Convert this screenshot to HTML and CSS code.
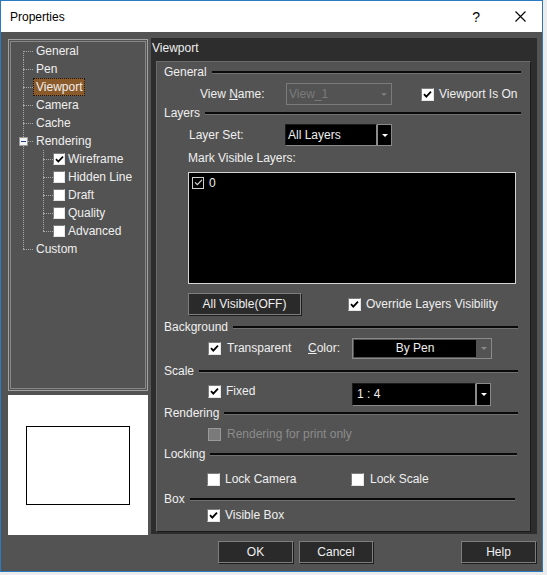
FILE: index.html
```html
<!DOCTYPE html>
<html lang="en">
<head>
    <meta charset="UTF-8">
    <title>Properties</title>
    <link rel="stylesheet" href="styles.css">
</head>
<body>
    <div class="window">
        <div class="titlebar">
            <span class="title">Properties</span>
            <span class="help-q">?</span>
            <span class="close">
                <svg width="11" height="11" viewBox="0 0 11 11"><path d="M0.5 0.5L10.5 10.5M10.5 0.5L0.5 10.5" stroke="#000" stroke-width="1.1" fill="none"/></svg>
            </span>
        </div>

        <div class="main">
            <div class="side">
                <div class="tree">
                    <div class="node first"><span class="gutter"><span class="elbow"></span></span><span class="label">General</span></div>
                    <div class="node"><span class="gutter"><span class="elbow"></span></span><span class="label">Pen</span></div>
                    <div class="node"><span class="gutter"><span class="elbow"></span></span><span class="label selected">Viewport</span></div>
                    <div class="node"><span class="gutter"><span class="elbow"></span></span><span class="label">Camera</span></div>
                    <div class="node"><span class="gutter"><span class="elbow"></span></span><span class="label">Cache</span></div>
                    <div class="node"><span class="gutter"><span class="toggle"></span><span class="elbow short"></span></span><span class="label">Rendering</span></div>
                    <div class="node"><span class="gutter"></span><span class="gutter child"><span class="elbow"></span></span><span class="cb small"><svg width="9" height="9" viewBox="0 0 9 9"><path d="M1 4.2L3.3 6.6L8 1.6" stroke="#000" stroke-width="1.7" fill="none"/></svg></span><span class="label">Wireframe</span></div>
                    <div class="node"><span class="gutter"></span><span class="gutter child"><span class="elbow"></span></span><span class="cb small"></span><span class="label">Hidden Line</span></div>
                    <div class="node"><span class="gutter"></span><span class="gutter child"><span class="elbow"></span></span><span class="cb small"></span><span class="label">Draft</span></div>
                    <div class="node"><span class="gutter"></span><span class="gutter child"><span class="elbow"></span></span><span class="cb small"></span><span class="label">Quality</span></div>
                    <div class="node"><span class="gutter"></span><span class="gutter child last"><span class="elbow"></span></span><span class="cb small"></span><span class="label">Advanced</span></div>
                    <div class="node last"><span class="gutter"><span class="elbow"></span></span><span class="label">Custom</span></div>
                </div>
                <div class="preview">
                    <div class="preview-rect"></div>
                </div>
            </div>

            <div class="page">
                <div class="page-title">Viewport</div>
                <div class="page-body">
                    <div class="group g-general">General</div>
                    <div class="row r-view">
                        <span class="lbl w-view">View <u>N</u>ame:</span>
                        <div class="combo disabled w-name">
                            <span class="combo-text">View_1</span>
                            <span class="combo-btn"><i class="arrow"></i></span>
                        </div>
                        <span class="cb on-ml29"><svg width="9" height="9" viewBox="0 0 9 9"><path d="M1 4.2L3.3 6.6L8 1.6" stroke="#000" stroke-width="1.8" fill="none"/></svg></span>
                        <span class="lbl ml5">Viewport Is On</span>
                    </div>

                    <div class="group g-tight">Layers</div>
                    <div class="row r-layerset">
                        <span class="lbl w-set">Layer Set:</span>
                        <div class="combo dark w-set-combo">
                            <span class="combo-text">All Layers</span>
                            <span class="combo-btn boxed"><i class="arrow"></i></span>
                        </div>
                    </div>
                    <div class="row r-mark"><span class="lbl">Mark Visible Layers:</span></div>
                    <div class="listbox">
                        <div class="list-item">
                            <span class="cb dark"><svg width="9" height="9" viewBox="0 0 9 9"><path d="M1 4.4L3.3 6.7L8 1.8" stroke="#d8d8d8" stroke-width="1.2" fill="none"/></svg></span>
                            <span class="lbl ml5">0</span>
                        </div>
                    </div>
                    <div class="row r-allvis">
                        <span class="btn w-allvis">All Visible(OFF)</span>
                        <span class="cb ml47"><svg width="9" height="9" viewBox="0 0 9 9"><path d="M1 4.2L3.3 6.6L8 1.6" stroke="#000" stroke-width="1.8" fill="none"/></svg></span>
                        <span class="lbl ml5">Override Layers Visibility</span>
                    </div>

                    <div class="group g-wide g-loose">Background</div>
                    <div class="row r-bg">
                        <span class="cb"><svg width="9" height="9" viewBox="0 0 9 9"><path d="M1 4.2L3.3 6.6L8 1.6" stroke="#000" stroke-width="1.8" fill="none"/></svg></span>
                        <span class="lbl ml6 w-81">Transparent</span>
                        <span class="lbl w-44"><u>C</u>olor:</span>
                        <div class="combo pen">
                            <span class="combo-text center">By Pen</span>
                            <span class="combo-btn"><i class="arrow grey"></i></span>
                        </div>
                    </div>

                    <div class="group g-wide g-loose">Scale</div>
                    <div class="row r-scale">
                        <span class="cb lift"><svg width="9" height="9" viewBox="0 0 9 9"><path d="M1 4.2L3.3 6.6L8 1.6" stroke="#000" stroke-width="1.8" fill="none"/></svg></span>
                        <span class="lbl ml5 w-126 lift">Fixed</span>
                        <div class="combo dark scale">
                            <span class="combo-text pad4">1 : 4</span>
                            <span class="combo-btn boxed"><i class="arrow"></i></span>
                        </div>
                    </div>

                    <div class="group g-wide g-tight">Rendering</div>
                    <div class="row r-print">
                        <span class="cb off"></span>
                        <span class="lbl ml6 muted">Rendering for print only</span>
                    </div>

                    <div class="group g-lock">Locking</div>
                    <div class="row r-lock">
                        <span class="cb"></span>
                        <span class="lbl ml5 w-126">Lock Camera</span>
                        <span class="cb"></span>
                        <span class="lbl ml6">Lock Scale</span>
                    </div>

                    <div class="group g-box">Box</div>
                    <div class="row r-box">
                        <span class="cb"><svg width="9" height="9" viewBox="0 0 9 9"><path d="M1 4.2L3.3 6.6L8 1.6" stroke="#000" stroke-width="1.8" fill="none"/></svg></span>
                        <span class="lbl ml5">Visible Box</span>
                    </div>
                </div>
            </div>
        </div>

        <div class="footer">
            <span class="btn w-ok">OK</span>
            <span class="btn w-cancel">Cancel</span>
            <span class="btn w-help">Help</span>
        </div>
    </div>
</body>
</html>
```

FILE: styles.css
```css
body{
    margin: 0;
    background: #ececec;
    font-family: "Liberation Sans", Arial, sans-serif;
    font-size: 12px;
}

.window{
    width: 543px;
    height: 572px;
    box-sizing: border-box;
    border: 1px solid #2b79c2;
    background: #535353;
    color: #efefef;
}

/* title bar */
.titlebar{
    height: 31px;
    background: #fff;
    color: #000;
    display: flex;
    align-items: center;
    padding-left: 9px;
}

.title{
    flex: 1;
}

.help-q{
    font-size: 14px;
    margin-right: 35px;
}

.close{
    display: flex;
    margin-right: 16px;
}

/* main area */
.main{
    display: flex;
    align-items: flex-start;
    gap: 3px;
    padding: 6px 0 0 7px;
}

.side{
    width: 140px;
    margin-top: 1px;
    display: flex;
    flex-direction: column;
    gap: 4px;
}

.tree{
    height: 352px;
    box-sizing: border-box;
    border: 1px solid #a2a2a2;
    box-shadow: inset 0 0 0 1px #535353, inset 0 0 0 2px #878787;
    padding-top: 2px;
}

.node{
    display: flex;
    align-items: center;
    height: 18px;
}

.gutter{
    width: 24px;
    align-self: stretch;
    display: flex;
    align-items: center;
    flex-shrink: 0;
    background: repeating-linear-gradient(to bottom, #a8a8a8 0 1px, transparent 1px 2px) 14px 0 / 1px 100% no-repeat;
}

.node.first > .gutter{
    background-position: 14px 100%;
    background-size: 1px 50%;
}

.node.last > .gutter,
.gutter.child.last{
    background-size: 1px 50%;
}

.gutter.child{
    width: 20px;
    background-position: 10px 0;
}

.elbow{
    margin-left: 14px;
    width: 10px;
    border-top: 1px dotted #a8a8a8;
}

.gutter.child .elbow{
    margin-left: 10px;
}

.elbow.short{
    margin-left: 0;
    width: 5px;
}

.toggle{
    width: 9px;
    height: 9px;
    box-sizing: border-box;
    margin-left: 10px;
    border: 1px solid #9a9a9a;
    background: #f2f2f2;
    display: flex;
    align-items: center;
    justify-content: center;
}

.toggle::before{
    content: '';
    width: 5px;
    height: 1px;
    background: #1e3f8a;
}

.label{
    border: 1px dotted transparent;
    padding: 0 2px;
    line-height: 16px;
    white-space: nowrap;
}

.label.selected{
    background: #8b5a2b;
    border-color: #151515;
}

.preview{
    height: 140px;
    background: #fff;
    display: flex;
    align-items: center;
    justify-content: center;
}

.preview-rect{
    width: 104px;
    height: 79px;
    box-sizing: border-box;
    border: 1px solid #000;
}

/* property page */
.page{
    width: 386px;
    height: 496px;
    background: #2d2d2d;
    display: flex;
    flex-direction: column;
}

.page-title{
    height: 23px;
    line-height: 20px;
    padding-left: 1px;
}

.page-body{
    flex: 1;
    margin: 0 6px 2px 5px;
    border: 1px solid;
    border-color: #6a6a6a #1b1b1b #1b1b1b #6a6a6a;
    background: #535353;
}

.group{
    display: flex;
    align-items: center;
    height: 14px;
    padding: 0 9px 0 7px;
    margin-top: 4px;
}

.group::after{
    content: '';
    flex: 1;
    height: 2px;
    margin-left: 5px;
    background: #0a0a0a;
    border-bottom: 1px solid #707070;
}

.g-general{
    margin-top: 3px;
}

.g-tight{
    margin-top: 1px;
}

.g-loose{
    margin-top: 5px;
}

.g-wide{
    padding-right: 12px;
}

.g-lock{
    padding-right: 13px;
}

.g-box{
    padding-right: 15px;
}

.row{
    display: flex;
    align-items: center;
    height: 22px;
}

.r-view{
    margin-top: 4px;
    padding-left: 43px;
}

.r-layerset{
    margin-top: 4px;
    padding-left: 32px;
}

.r-mark{
    margin-top: 5px;
    height: 14px;
    padding-left: 31px;
}

.r-allvis{
    margin-top: 9px;
    padding-left: 31px;
}

.r-bg{
    margin-top: 3px;
    padding-left: 51px;
}

.r-scale{
    margin-top: 5px;
    padding-left: 51px;
}

.r-print{
    margin-top: 5px;
    height: 18px;
    padding-left: 51px;
}

.r-lock{
    margin-top: 9px;
    height: 18px;
    padding-left: 50px;
}

.r-box{
    height: 18px;
    padding-left: 50px;
}

.lbl{
    white-space: nowrap;
}

.muted{
    color: #8c8c8c;
}

.lift{
    margin-bottom: 6px;
}

.ml5{ margin-left: 5px; }
.ml6{ margin-left: 6px; }
.ml47{ margin-left: 47px; }
.on-ml29{ margin-left: 29px; }
.w-view{ width: 86px; }
.w-set{ width: 96px; }
.w-81{ width: 81px; }
.w-44{ width: 44px; }
.w-126{ width: 126px; }

/* checkboxes */
.cb{
    width: 13px;
    height: 13px;
    box-sizing: border-box;
    flex-shrink: 0;
    background: #fff;
    border: 1px solid;
    border-color: #7c7c7c #e6e6e6 #e6e6e6 #7c7c7c;
    display: flex;
    align-items: center;
    justify-content: center;
}

.cb.small{
    width: 12px;
    height: 12px;
}

.cb.dark{
    width: 12px;
    height: 12px;
    background: #000;
    border: 1px solid #cfcfcf;
}

.cb.off{
    background: #7a7a7a;
    border-color: #9a9a9a;
}

/* combo boxes */
.combo{
    display: flex;
    height: 22px;
    box-sizing: border-box;
}

.combo-text{
    flex: 1;
    line-height: 20px;
    padding-left: 2px;
    white-space: nowrap;
}

.combo-text.center{
    text-align: center;
    padding-left: 0;
}

.combo-text.pad4{
    padding-left: 4px;
}

.combo-btn{
    width: 15px;
    display: flex;
    align-items: center;
    justify-content: center;
}

.arrow{
    width: 0;
    height: 0;
    border-left: 3px solid transparent;
    border-right: 3px solid transparent;
    border-top: 3px solid #fff;
}

.arrow.grey{
    border-top-color: #8a8a8a;
}

.combo.disabled{
    border: 1px solid #7b7b7b;
    color: #7b7b7b;
}

.combo.disabled .arrow{
    border-top-color: #7b7b7b;
}

.w-name{
    width: 106px;
}

.combo.dark .combo-text{
    background: #000;
    border: 1px solid;
    border-color: #1a1a1a #8a8a8a #8a8a8a #1a1a1a;
}

.combo.dark .combo-btn.boxed{
    background: #000;
    border: 1px solid #8a8a8a;
    width: 13px;
}

.w-set-combo{
    width: 107px;
}

.combo.pen{
    width: 140px;
    height: 21px;
    border: 1px solid #8a8a8a;
    padding: 1px 0 1px 1px;
}

.combo.pen .combo-text{
    background: #000;
    line-height: 17px;
}

.combo.scale{
    width: 139px;
    height: 23px;
}

.combo.scale .combo-text{
    line-height: 21px;
}

/* list */
.listbox{
    margin: 7px 0 0 31px;
    width: 328px;
    height: 112px;
    box-sizing: border-box;
    border: 1px solid #d4d4d4;
    background: #000;
    padding: 3px;
}

.list-item{
    display: flex;
    align-items: center;
    height: 13px;
}

/* buttons */
.btn{
    display: flex;
    align-items: center;
    justify-content: center;
    height: 22px;
    box-sizing: border-box;
    background: #2a2a2a;
    border: 1px solid #7e7e7e;
    box-shadow: 1px 1px 0 #1c1c1c;
    color: #f0f0f0;
}

.w-allvis{ width: 113px; }

.footer{
    display: flex;
    gap: 6px;
    margin-top: 6px;
    padding: 0 6px 0 217px;
}

.w-ok{ width: 75px; }
.w-cancel{ width: 74px; }
.w-help{ width: 75px; margin-left: auto; }
```
